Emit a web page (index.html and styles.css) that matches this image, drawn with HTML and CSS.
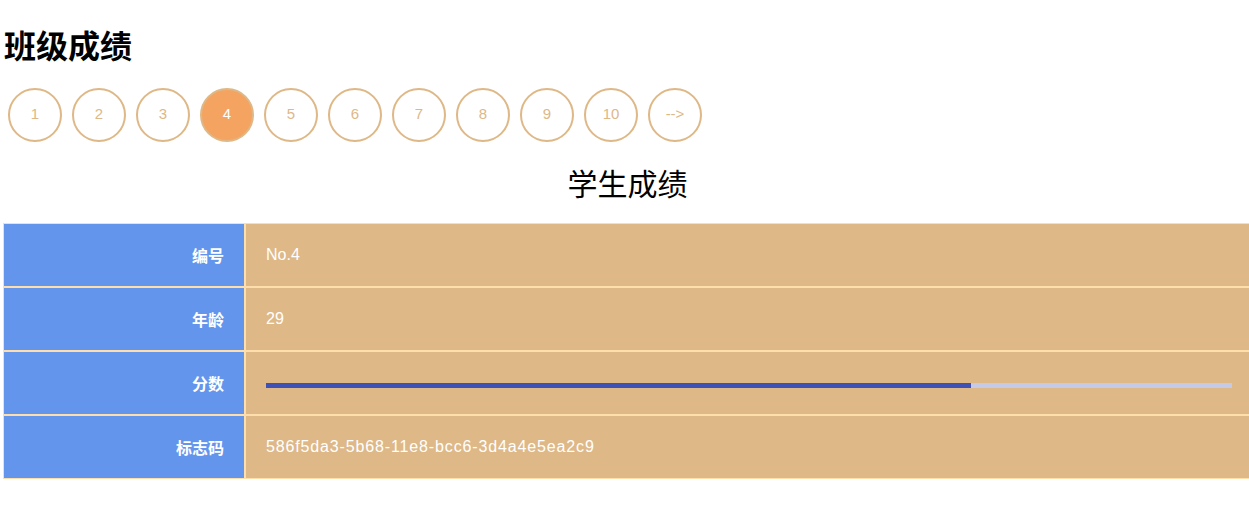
FILE: index.html
```html
<!DOCTYPE html>
<html lang="zh">
<head>
<meta charset="utf-8">
<title>班级成绩</title>
<link rel="stylesheet" href="styles.css">
</head>
<body>
<h1 class="title">班级成绩</h1>
<nav class="pager">
  <span class="page">1</span>
  <span class="page">2</span>
  <span class="page">3</span>
  <span class="page active">4</span>
  <span class="page">5</span>
  <span class="page">6</span>
  <span class="page">7</span>
  <span class="page">8</span>
  <span class="page">9</span>
  <span class="page">10</span>
  <span class="page">--&gt;</span>
</nav>
<h2 class="subtitle">学生成绩</h2>
<div class="grid">
  <div class="label">编号</div>
  <div class="value">No.4</div>
  <div class="label">年龄</div>
  <div class="value">29</div>
  <div class="label">分数</div>
  <div class="value">
    <div class="bar"><div class="fill" style="width:73%"></div></div>
  </div>
  <div class="label">标志码</div>
  <div class="value"><span class="uuid">586f5da3-5b68-11e8-bcc6-3d4a4e5ea2c9</span></div>
</div>
</body>
</html>
```

FILE: styles.css
```css
html, body {
  margin: 0;
  padding: 0;
  background: #ffffff;
  overflow-x: hidden;
}
body {
  font-family: "Liberation Sans", "Noto Sans CJK SC", sans-serif;
  color: #000;
}
.title {
  margin: 0;
  padding: 26px 0 0 4px;
  font-size: 32px;
  line-height: 36px;
  font-weight: bold;
  font-family: "Noto Sans CJK SC", sans-serif;
}
.pager {
  display: flex;
  gap: 10px;
  padding-left: 8px;
  margin-top: 26px;
}
.page {
  box-sizing: border-box;
  width: 54px;
  height: 54px;
  padding-bottom: 3px;
  border: 2px solid #deb887;
  border-radius: 50%;
  display: flex;
  align-items: center;
  justify-content: center;
  color: #deb887;
  font-size: 15px;
}
.page.active {
  background: #f4a460;
  color: #ffffff;
}
.subtitle {
  margin: 20px 0 21px 0;
  text-align: center;
  font-size: 30px;
  line-height: 40px;
  font-weight: normal;
  font-family: "Noto Sans CJK SC", sans-serif;
  padding-left: 6px;
}
.grid {
  display: grid;
  grid-template-columns: 240px 1fr;
  grid-auto-rows: 62px;
  gap: 2px;
  padding: 1px;
  margin-left: 3px;
  width: 1246px;
  background: #ffdead;
}
.label, .value {
  display: flex;
  align-items: center;
  color: #ffffff;
  font-size: 16px;
}
.label {
  background: #6495ed;
  justify-content: flex-end;
  padding-right: 20px;
  font-weight: bold;
}
.value {
  background: #deb887;
  padding-left: 20px;
  padding-right: 18px;
}
.uuid {
  letter-spacing: 0.86px;
}
.bar {
  flex: 1;
  height: 5px;
  margin-top: 4px;
  background: #c5cae9;
}
.fill {
  height: 100%;
  background: #3f51b5;
}
```
